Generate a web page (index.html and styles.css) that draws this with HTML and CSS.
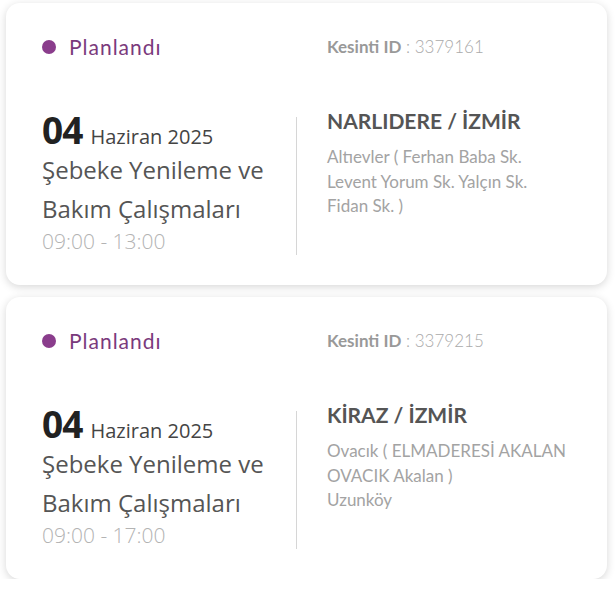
FILE: index.html
```html
<!DOCTYPE html>
<html lang="tr">
<head>
<meta charset="utf-8">
<link rel="stylesheet" href="styles.css">
</head>
<body>
<div class="list">
  <div class="card">
    <div class="head">
      <div class="status"><span class="dot"></span>Planlandı</div>
      <div class="kid"><b>Kesinti ID</b> : 3379161</div>
    </div>
    <div class="body">
      <div class="left">
        <div class="date"><span class="day">04</span> Haziran 2025</div>
        <div class="title">Şebeke Yenileme ve Bakım Çalışmaları</div>
        <div class="time">09:00 - 13:00</div>
      </div>
      <div class="right">
        <div class="place">NARLIDERE / İZMİR</div>
        <div class="addr">Altıevler ( Ferhan Baba Sk.<br>Levent Yorum Sk. Yalçın Sk.<br>Fidan Sk. )</div>
      </div>
    </div>
  </div>
  <div class="card">
    <div class="head">
      <div class="status"><span class="dot"></span>Planlandı</div>
      <div class="kid"><b>Kesinti ID</b> : 3379215</div>
    </div>
    <div class="body">
      <div class="left">
        <div class="date"><span class="day">04</span> Haziran 2025</div>
        <div class="title">Şebeke Yenileme ve Bakım Çalışmaları</div>
        <div class="time">09:00 - 17:00</div>
      </div>
      <div class="right">
        <div class="place">KİRAZ / İZMİR</div>
        <div class="addr">Ovacık ( ELMADERESİ AKALAN<br>OVACIK Akalan )<br>Uzunköy</div>
      </div>
    </div>
  </div>
</div>
</body>
</html>
```
FILE: styles.css
```css
html, body { margin: 0; padding: 0; background: #fff; }
.list {
  padding: 3px 9px 0 6px;
  display: flex;
  flex-direction: column;
  gap: 12px;
}
.card {
  height: 282px;
  box-sizing: border-box;
  background: #fff;
  border-radius: 14px;
  box-shadow: 0 2px 8px rgba(0,0,0,0.16);
  padding: 31px 36px 0 36px;
}
.head, .body {
  display: grid;
  grid-template-columns: 254px 1fr;
}
.status {
  display: flex;
  align-items: center;
  font-family: "Lato", sans-serif;
  font-size: 21px;
  letter-spacing: 1px;
  line-height: 26px;
  color: #7a3a7c;
}
.dot {
  width: 14px; height: 14px;
  border-radius: 50%;
  background: #8a3d8c;
  margin-right: 13px;
}
.kid {
  padding-left: 31px;
  font-family: "Lato", sans-serif;
  font-size: 17px;
  line-height: 26px;
  color: #aaa;
  font-weight: 300;
}
.kid b { font-weight: 700; color: #999; }
.body { margin-top: 57px; align-items: start; }
.left {
  font-family: "Open Sans", sans-serif;
  margin-top: -4px;
}
.date { color: #444; font-size: 20px; line-height: 34px; }
.day { font-size: 37px; font-weight: 700; color: #222; letter-spacing: -1px; margin-right: 3px; }
.title {
  font-size: 24px;
  line-height: 39px;
  color: #555;
  margin-top: -4px;
}
.time {
  font-size: 21px;
  line-height: 28px;
  color: #b3b3b3;
  font-weight: 300;
  margin-top: -1px;
}
.right {
  align-self: stretch;
  border-left: 1px solid #d6d6d6;
  padding-left: 30px;
  font-family: "Lato", sans-serif;
}
.place {
  font-size: 21px;
  font-weight: 700;
  color: #555;
  line-height: 28px;
  margin-top: -10px;
}
.addr {
  margin-top: 10px;
  font-size: 17px;
  line-height: 24.5px;
  color: #a3a3a3;
}
```
